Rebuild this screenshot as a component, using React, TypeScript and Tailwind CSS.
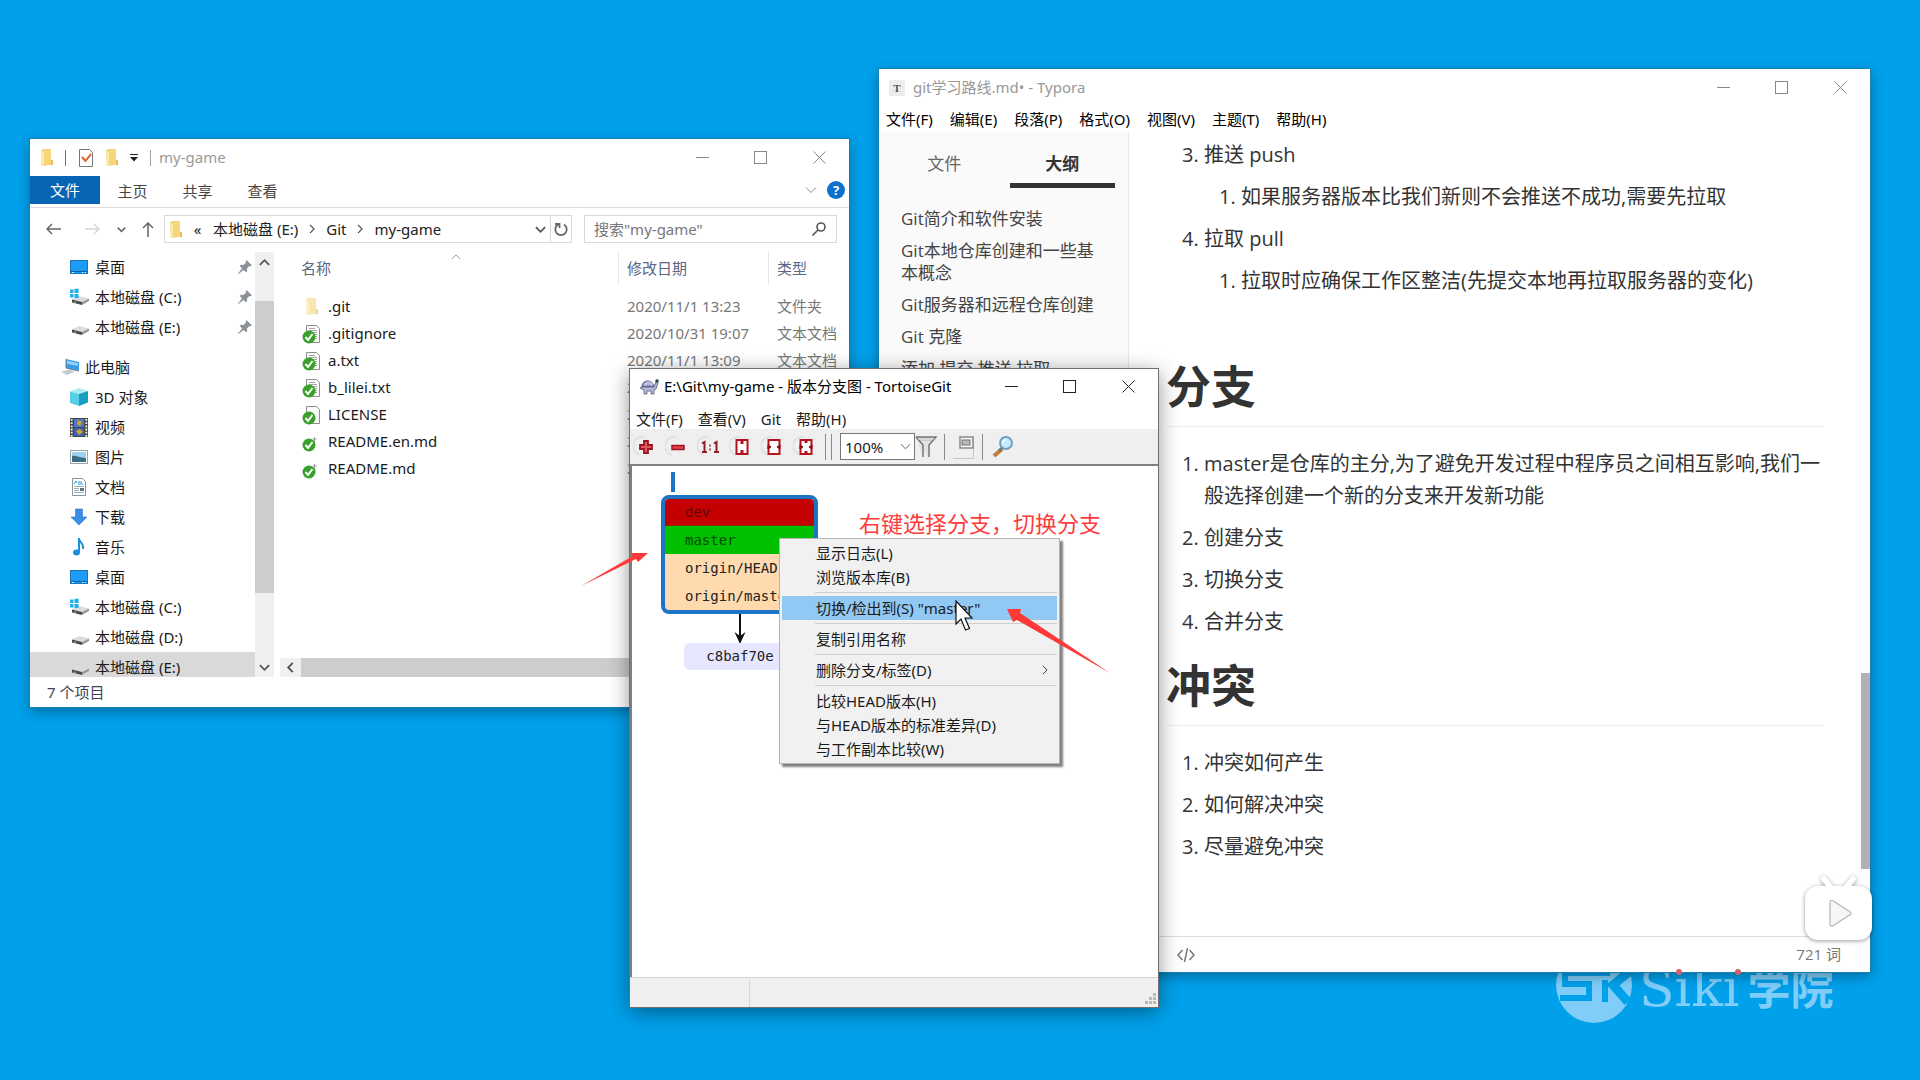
import type { ReactNode } from "react";

const uiFont = "font-['Noto_Sans','Noto_Sans_CJK_SC',sans-serif]";
const docFont = "font-['Open_Sans','Noto_Sans_CJK_SC',sans-serif]";

type IconProps = { className?: string };

function Chevron({ dir, className = "" }: { dir: "up" | "down" | "left" | "right"; className?: string }) {
  const paths = {
    up: "M1 8.5 6 3.5l5 5",
    down: "M1 3.5 6 8.5l5-5",
    left: "M8.5 1 3.5 6l5 5",
    right: "M3.5 1 8.5 6l-5 5",
  };
  return (
    <svg viewBox="0 0 12 12" className={`shrink-0 fill-none stroke-current ${className}`}>
      <path d={paths[dir]} />
    </svg>
  );
}

function FolderIcon({ className = "" }: IconProps) {
  return (
    <svg viewBox="0 0 12 17" className={`w-3 h-[17px] shrink-0 ${className}`}>
      <path d="M0 1.5 2 0h8v11h2v4.5L2 17l-2-1.5z" fill="#f5d67b" />
      <path d="M0 1.5 3 3v14l-3-1.5z" fill="#fbe9a9" />
      <path d="M10 11h2v5l-2 .3z" fill="#e9bd52" />
    </svg>
  );
}

function DesktopIcon() {
  return (
    <svg viewBox="0 0 18 18" className="w-[18px] h-[18px]">
      <rect x="0.5" y="2.5" width="17" height="13" fill="#1e9bf5" stroke="#1b75b5" />
      <path d="M1 13.5h16" stroke="#0b62a5" />
      <path d="M2 14.5h2M12 14.5h1.500M15 14.5h1" stroke="#d8efff" />
    </svg>
  );
}

function DriveIcon({ system = false }: { system?: boolean }) {
  return (
    <svg viewBox="0 0 20 18" className="w-5 h-[18px]">
      <path d="M2 11.500 9 8l10 2.500-7 3.500z" fill="#dcdcdc" />
      <path d="M2 11.500 12 14v3L2 14.500z" fill="#4a4a4a" />
      <path d="M12 14l7-3.500v2.500L12 17z" fill="#9a9a9a" />
      <path d="M4 14.200h2" stroke="#7fe07f" />
      {system && <path d="M0 1.500h3.500V5H0zM4.500 1 8.500.500V5h-4zM0 6h3.500v3.500H0zM4.500 6h4v4h-4z" fill="#1fb0ea" />}
    </svg>
  );
}

function ComputerIcon() {
  return (
    <svg viewBox="0 0 20 18" className="w-5 h-[18px]">
      <path d="M6 1l13 3v9L6 10z" fill="#3a9be0" />
      <path d="M7 2.500l11 2.500v3L7 6z" fill="#8fd0f7" />
      <path d="M1 14l8-2.500 6 2-8 3.500z" fill="#c3cbd3" />
      <path d="M6 1v9l13 3" stroke="#6a7f90" fill="none" />
    </svg>
  );
}

function CubeIcon() {
  return (
    <svg viewBox="0 0 18 18" className="w-[18px] h-[18px]">
      <path d="M0 3.500 9 0l9 3-9 3z" fill="#a9ecf5" />
      <path d="M0 3.500 9 6v12l-9-3z" fill="#55cfe3" />
      <path d="M9 6l9-3v11.500L9 18z" fill="#169fc0" />
    </svg>
  );
}

function VideoIcon() {
  return (
    <svg viewBox="0 0 18 19" className="w-[18px] h-[19px]">
      <rect width="18" height="19" fill="#474747" />
      <path d="M1.700 1v18M16.300 1v18" stroke="#f2f2f2" strokeWidth="1.800" strokeDasharray="1.800 1.400" />
      <rect x="4" y="1" width="10" height="8" fill="#5078c8" />
      <rect x="4" y="10" width="10" height="8" fill="#3b62b4" />
      <path d="M8 2l4 2-2 4-3-2zM6 13l4-2 3 3-4 3z" fill="#d5a52a" />
    </svg>
  );
}

function PictureIcon() {
  return (
    <svg viewBox="0 0 18 18" className="w-[18px] h-[18px]">
      <rect x="0.500" y="2.500" width="17" height="13" fill="#fff" stroke="#9aa4ad" />
      <rect x="2" y="4" width="14" height="10" fill="#9fd0f2" />
      <path d="M2 8c4-1 7 2 14 2v4H2z" fill="#3c6c88" />
    </svg>
  );
}

function DocumentIcon() {
  return (
    <svg viewBox="0 0 18 18" className="w-[18px] h-[18px]">
      <path d="M2.500.500h10l3 3v14h-13z" fill="#fff" stroke="#8d959c" />
      <path d="M4 6l2-3 1 2M8 4h4M8 6h5" stroke="#2c93d6" fill="none" />
      <path d="M4 8.500h10M4 10.500h5M4 12.500h5M4 14.500h10" stroke="#9fb0bd" />
      <rect x="10" y="10" width="4" height="3" fill="#5d7486" />
    </svg>
  );
}

function DownloadIcon() {
  return (
    <svg viewBox="0 0 18 18" className="w-[18px] h-[18px]">
      <path d="M5.500 1h7v8H17l-8 8-8-8h4.500z" fill="#3a8ee6" stroke="#2b74c4" strokeWidth="0.600" />
    </svg>
  );
}

function MusicIcon() {
  return (
    <svg viewBox="0 0 18 18" className="w-[18px] h-[18px]">
      <path d="M9 0v14M9 1c1 4 5 4 4 10" stroke="#1d8fe0" strokeWidth="2" fill="none" />
      <ellipse cx="6.500" cy="14.500" rx="3.500" ry="3" fill="#1d8fe0" />
    </svg>
  );
}

function PinIcon() {
  return (
    <svg viewBox="0 0 14 14" className="w-[14px] h-[14px]" fill="#8b9299">
      <path d="M8.500 0 14 5.500l-1.500.800-1-.300-2.500 2.500.200 2.500-1.200 1.200L5.500 10 .500 14 0 13.500 4 8.500 1.800 6 3 4.800l2.500.200L8 2.500 7.700 1.500z" />
    </svg>
  );
}

function FileIcon({ kind }: { kind: string }) {
  if (kind === "folder") return <FolderIcon className="opacity-60 ml-1" />;
  return (
    <svg viewBox="0 0 19 20" className="w-[19px] h-5">
      {kind !== "md" && <path d="M4.500 1.500h10l3 3v14h-13z" fill="#fbfbfb" stroke="#8e8e8e" />}
      {kind === "text" && <path d="M7 4.500h6M7 6.500h8M9 8.500h6M12 10.500h3M13 12.500h2M13 14.500h2" stroke="#a5a5a5" />}
      {kind === "md" && <path d="M12.500 5v5M10.500 7h4" stroke="#9a9a9a" fill="none" />}
      <circle cx="7" cy="13" r="6.500" fill="#39a12b" />
      <path d="M3.500 13l2.500 3 4.500-6" stroke="#fff" strokeWidth="2" fill="none" />
    </svg>
  );
}

function WindowControls({ className }: { className: string }) {
  return (
    <div className={`ml-auto flex self-stretch ${className}`}>
      <button aria-label="最小化" className="w-[58px] flex items-center justify-center">
        <svg viewBox="0 0 13 13" className="w-[13px] h-[13px] stroke-current"><path d="M0 6.500h13" /></svg>
      </button>
      <button aria-label="最大化" className="w-[58px] flex items-center justify-center">
        <svg viewBox="0 0 13 13" className="w-[13px] h-[13px] fill-none stroke-current"><rect x="0.500" y="0.500" width="12" height="12" /></svg>
      </button>
      <button aria-label="关闭" className="w-[60px] flex items-center justify-center">
        <svg viewBox="0 0 13 13" className="w-[13px] h-[13px] stroke-current"><path d="M.500.500l12 12M12.500.500l-12 12" /></svg>
      </button>
    </div>
  );
}

const quickAccess = [
  { name: "桌面", icon: <DesktopIcon /> },
  { name: "本地磁盘 (C:)", icon: <DriveIcon system /> },
  { name: "本地磁盘 (E:)", icon: <DriveIcon /> },
];

const computer = [
  { name: "3D 对象", icon: <CubeIcon /> },
  { name: "视频", icon: <VideoIcon /> },
  { name: "图片", icon: <PictureIcon /> },
  { name: "文档", icon: <DocumentIcon /> },
  { name: "下载", icon: <DownloadIcon /> },
  { name: "音乐", icon: <MusicIcon /> },
  { name: "桌面", icon: <DesktopIcon /> },
  { name: "本地磁盘 (C:)", icon: <DriveIcon system /> },
  { name: "本地磁盘 (D:)", icon: <DriveIcon /> },
  { name: "本地磁盘 (E:)", icon: <DriveIcon />, active: true },
];

const files = [
  { name: ".git", kind: "folder", date: "2020/11/1 13:23", type: "文件夹" },
  { name: ".gitignore", kind: "text", date: "2020/10/31 19:07", type: "文本文档" },
  { name: "a.txt", kind: "text", date: "2020/11/1 13:09", type: "文本文档" },
  { name: "b_lilei.txt", kind: "text", date: "2020/11/1 13:09", type: "文本文档" },
  { name: "LICENSE", kind: "blank", date: "2020/10/31 19:07", type: "文件" },
  { name: "README.en.md", kind: "md", date: "2020/10/31 19:07", type: "MD 文件" },
  { name: "README.md", kind: "md", date: "2020/10/31 19:07", type: "MD 文件" },
];

function TreeItem({ name, icon, pinned, active }: { name: string; icon: ReactNode; pinned?: boolean; active?: boolean }) {
  return (
    <button className={`w-full h-[30px] pl-10 pr-[3px] flex items-center text-left ${active ? "bg-[#d9d9d9]" : ""}`}>
      <span className="w-[25px] shrink-0 flex items-center">{icon}</span>
      <span className="flex-1 whitespace-nowrap">{name}</span>
      {pinned && <PinIcon />}
    </button>
  );
}

function Explorer() {
  return (
    <section className={`absolute left-[30px] top-[139px] w-[819px] h-[568px] flex flex-col bg-white overflow-hidden text-[15px] text-[#1a1a1a] shadow-[0_0_0_1px_#1580b4,0_4px_12px_rgba(0,0,0,0.35)] ${uiFont}`}>
      <header className="h-[37px] pl-[11px] flex items-center gap-3">
        <FolderIcon />
        <span className="w-px h-4 bg-gray-500" />
        <svg viewBox="0 0 16 18" className="w-4 h-[18px] shrink-0">
          <path d="M1.500.500h10l3 3v14h-13z" fill="#fff" stroke="#757575" />
          <path d="M4 8l3.500 4L13 5" stroke="#d9602a" strokeWidth="2" fill="none" />
        </svg>
        <FolderIcon />
        <button aria-label="自定义快速访问工具栏">
          <svg viewBox="0 0 8 8" className="w-2 h-2"><path d="M0 .500h8" stroke="#222" /><path d="M0 3h8L4 7.500z" fill="#222" /></svg>
        </button>
        <div className="flex items-center gap-2">
          <span className="w-px h-4 bg-gray-400" />
          <h2 className="text-[#999]">my-game</h2>
        </div>
        <WindowControls className="text-[#888]" />
      </header>
      <nav className="h-8 pb-[3px] flex items-stretch border-b border-[#dedede] text-[#444]">
        <button className="w-[70px] pt-px bg-[#0865b5] text-white">文件</button>
        <button className="w-[65px] pt-[3px]">主页</button>
        <button className="w-[65px] pt-[3px]">共享</button>
        <button className="w-[65px] pt-[3px]">查看</button>
        <button aria-label="展开功能区" className="ml-auto text-[#888]"><Chevron dir="down" className="w-3 h-3" /></button>
        <button aria-label="帮助" className="ml-[10px] mr-1 self-center w-[18px] h-[18px] rounded-full bg-[#0c71cd] text-white text-[13px] leading-[18px] font-bold">?</button>
      </nav>
      <div className="h-11 pr-3 pb-[2px] flex items-center text-[#666]">
        <div className="w-[134px] shrink-0 pl-4 flex items-center">
          <button aria-label="后退"><svg viewBox="0 0 15 12" className="w-[15px] h-3 fill-none stroke-[#666] stroke-[1.500]"><path d="M15 6H1M6 1 1 6l5 5" /></svg></button>
          <button aria-label="前进" className="ml-6"><svg viewBox="0 0 15 12" className="w-[15px] h-3 fill-none stroke-[#d5d5d5] stroke-[1.500]"><path d="M0 6h14M9 1l5 5-5 5" /></svg></button>
          <button aria-label="最近浏览的位置" className="ml-[17px]"><Chevron dir="down" className="w-[9px] h-[9px] stroke-2" /></button>
          <button aria-label="上移" className="ml-4"><svg viewBox="0 0 12 15" className="w-3 h-[15px] fill-none stroke-[#666] stroke-[1.500]"><path d="M6 15V1M1 6l5-5 5 5" /></svg></button>
        </div>
        <div className="w-[408px] shrink-0 h-7 pl-[5px] flex items-center border border-[#d9d9d9] text-[#222] whitespace-nowrap">
          <FolderIcon />
          <span className="w-[31px] text-center leading-none">«</span>
          <button>本地磁盘 (E:)</button>
          <Chevron dir="right" className="mx-[9px] w-[10px] h-[10px] text-[#555] stroke-[1.500]" />
          <button>Git</button>
          <Chevron dir="right" className="mx-[9px] w-[10px] h-[10px] text-[#555] stroke-[1.500]" />
          <button>my-game</button>
          <button aria-label="以前的位置" className="ml-auto mr-1 text-[#555]"><Chevron dir="down" className="w-[11px] h-[11px] stroke-2" /></button>
          <button aria-label="刷新" className="w-[21px] h-full flex items-center justify-center border-l border-[#d9d9d9]">
            <svg viewBox="0 0 14 15" className="w-[14px] h-[15px] fill-none stroke-[#666] stroke-[1.800]"><path d="M10 2.500a5.700 5.700 0 1 1-6 0M1 2h4.500v4" /></svg>
          </button>
        </div>
        <label className="ml-3 min-w-0 flex-1 h-7 pl-[9px] pr-[10px] flex items-center border border-[#d9d9d9]">
          <input type="search" aria-label="搜索 my-game" placeholder={'搜索"my-game"'} className="min-w-0 flex-1 outline-none placeholder:text-[#777]" />
          <svg viewBox="0 0 14 14" className="w-[14px] h-[14px] shrink-0 fill-none stroke-[#555] stroke-[1.600]"><circle cx="9" cy="5" r="4" /><path d="M6 8l-5.500 5.500" /></svg>
        </label>
      </div>
      <div className="flex-1 min-h-0 flex">
        <nav className="w-[225px] overflow-hidden">
          {quickAccess.map((item) => <TreeItem key={item.name} {...item} pinned />)}
          <button className="mt-[10px] w-full h-[30px] pl-[30px] flex items-center">
            <span className="w-[25px]"><ComputerIcon /></span>此电脑
          </button>
          {computer.map((item) => <TreeItem key={item.name} {...item} />)}
        </nav>
        <div className="w-[19px] flex flex-col bg-[#f0f0f0] text-[#555]">
          <button aria-label="向上滚动" className="h-[49px] flex justify-center pt-[5px]"><Chevron dir="up" className="w-[11px] h-[11px] stroke-2" /></button>
          <div className="flex-1 bg-[#cdcdcd]" />
          <button aria-label="向下滚动" className="h-[84px] flex items-end justify-center pb-1"><Chevron dir="down" className="w-[11px] h-[11px] stroke-2" /></button>
        </div>
        <div className="ml-[6px] flex-1 min-w-0 flex flex-col">
          <div className="relative flex-1 min-h-0 overflow-hidden">
            <Chevron dir="up" className="absolute left-[171px] top-0 w-[10px] h-[10px] text-[#888]" />
            <table className="w-full table-fixed text-left whitespace-nowrap">
              <thead className="text-[#5a6684]">
                <tr>
                  <th className="p-0 pb-[9px] font-normal"><div className="h-8 pl-[21px] leading-8 border-r border-[#e5e5e5]">名称</div></th>
                  <th className="w-[150px] p-0 pb-[9px] font-normal"><div className="h-8 pl-2 leading-8 border-r border-[#e5e5e5]">修改日期</div></th>
                  <th className="w-[80px] p-0 pb-[9px] font-normal"><div className="h-8 pl-2 leading-8">类型</div></th>
                </tr>
              </thead>
              <tbody>
                {files.map((file) => (
                  <tr key={file.name} className="h-[27px]">
                    <td className="p-0 pl-[22px]">
                      <div className="flex items-center">
                        <span className="w-[26px]"><FileIcon kind={file.kind} /></span>
                        {file.name}
                      </div>
                    </td>
                    <td className="p-0 pl-2 text-[#777]">{file.date}</td>
                    <td className="p-0 pl-2 text-[#777]">{file.type}</td>
                  </tr>
                ))}
              </tbody>
            </table>
          </div>
          <div className="h-[19px] flex bg-[#cdcdcd]">
            <button aria-label="向左滚动" className="w-[21px] bg-[#f0f0f0] flex items-center justify-center text-[#555]"><Chevron dir="left" className="w-[11px] h-[11px] stroke-2" /></button>
          </div>
        </div>
      </div>
      <footer className="h-[30px] pl-[17px] leading-[30px] text-[#3c4457]">7 个项目</footer>
    </section>
  );
}

const outline = ["Git简介和软件安装", "Git本地仓库创建和一些基本概念", "Git服务器和远程仓库创建", "Git 克隆", "添加 提交 推送 拉取"];

function Typora() {
  return (
    <section className={`absolute left-[879px] top-[69px] w-[991px] h-[903px] flex flex-col bg-white overflow-hidden text-[#333] shadow-[0_0_0_1px_#1580b4,0_4px_12px_rgba(0,0,0,0.35)] ${docFont}`}>
      <header className={`h-[37px] pl-[10px] flex items-center text-[15px] text-[#999] ${uiFont}`}>
        <span className="w-4 h-4 mr-2 bg-[#ececec] text-center text-[11px] leading-4 font-bold text-[#555] font-['Liberation_Serif',serif]">T</span>
        <h2>git学习路线.md• - Typora</h2>
        <WindowControls className="text-[#888]" />
      </header>
      <nav className={`h-[26px] pl-[7px] flex items-center gap-[17px] text-[15px] text-black ${uiFont}`}>
        {["文件(F)", "编辑(E)", "段落(P)", "格式(O)", "视图(V)", "主题(T)", "帮助(H)"].map((item) => (
          <button key={item}>{item}</button>
        ))}
      </nav>
      <div className="flex-1 min-h-0 flex">
        <aside className="w-[250px] bg-[#fafafa] border-r border-[#e8e8e8] overflow-hidden text-[17px] leading-[22px] text-[#444]">
          <div className="mx-[13px] grid grid-cols-2">
            <button className="mr-[7px] h-14 pt-3 pb-[5px] text-[#666]">文件</button>
            <button className="ml-[6px] h-14 pt-3 border-b-[5px] border-[#333] font-bold text-[#333]">大纲</button>
          </div>
          <ul className="mt-[15px] pl-[22px] pr-5">
            {outline.map((item) => (
              <li key={item} className="py-[5px]"><a href="#">{item}</a></li>
            ))}
          </ul>
        </aside>
        <article className="flex-1 pl-[37px] pr-[37px] pt-[7px] overflow-hidden text-xl leading-8 [&_li+li]:mt-[10px] [&_ol]:list-decimal [&_ol]:pl-[38px] [&_ol_ol]:pl-[37px] [&_h1]:mt-[21px] [&_h1]:pb-3 [&_h1]:mb-[21px] [&_h1]:border-b [&_h1]:border-[#eee] [&_h1]:text-[45px] [&_h1]:leading-[54px] [&_h1]:font-bold">
          <ol start={3}>
            <li>推送 push<ol className="mt-[10px]"><li>如果服务器版本比我们新则不会推送不成功,需要先拉取</li></ol></li>
            <li>拉取 pull<ol className="mt-[10px]"><li>拉取时应确保工作区整洁(先提交本地再拉取服务器的变化)</li></ol></li>
          </ol>
          <p className="mt-[10px] h-8" />
          <h1>分支</h1>
          <ol>
            <li>master是仓库的主分,为了避免开发过程中程序员之间相互影响,我们一般选择创建一个新的分支来开发新功能</li>
            <li>创建分支</li>
            <li>切换分支</li>
            <li>合并分支</li>
          </ol>
          <h1>冲突</h1>
          <ol>
            <li>冲突如何产生</li>
            <li>如何解决冲突</li>
            <li>尽量避免冲突</li>
          </ol>
        </article>
        <div className="w-[9px] pb-[67px] flex flex-col justify-end">
          <div className="h-[196px] bg-[#b3b0b5]" />
        </div>
      </div>
      <footer className="h-9 pl-[298px] pr-[29px] flex items-center justify-between border-t border-[#ddd] text-[15px] text-[#777]">
        <button aria-label="源代码模式">
          <svg viewBox="0 0 18 14" className="w-[18px] h-[14px] fill-none stroke-current stroke-[1.500]"><path d="M5.500 2 1 7l4.500 5M12.500 2 17 7l-4.500 5M10.500 0l-3 14" /></svg>
        </button>
        <button>721 词</button>
      </footer>
    </section>
  );
}

function ToolButton({ label, children }: { label: string; children: ReactNode }) {
  return (
    <button aria-label={label} className="w-8 h-full flex items-center justify-center">
      <svg viewBox="0 0 26 26" className="w-[26px] h-[26px]">
        <path d="M7 21A9 9 0 0 1 12 3" fill="none" stroke="#dde4e2" strokeWidth="2" />
        {children}
      </svg>
    </button>
  );
}

function Separator({ className = "" }: IconProps) {
  return <span className={`w-px h-[26px] bg-[#8a8a8a] ${className}`} />;
}

function TortoiseGit() {
  return (
    <section className={`absolute left-[630px] top-[369px] w-[528px] h-[638px] flex flex-col bg-white text-[15px] text-[#1a1a1a] shadow-[0_0_0_1px_#707070,0_4px_20px_rgba(0,0,0,0.45)] ${uiFont}`}>
      <header className="h-[35px] pl-[9px] flex items-center text-black">
        <svg viewBox="0 0 20 16" className="w-5 h-4 mr-[5px]">
          <path d="M3 8c0-8 11-8 12 0z" fill="#8f95c2" stroke="#4d5276" />
          <path d="M6 7l2-4h3l2 4M5 5h9" stroke="#d9dcf0" fill="none" />
          <path d="M3 8h12l2-5 2 1-2 6-2 1v4h-3v-3H8v3H5v-4L1 9z" fill="#b4b9d6" stroke="#575c80" strokeWidth="0.800" />
          <circle cx="18" cy="2" r="1.800" fill="#274b4a" />
        </svg>
        <h2>E:\Git\my-game - 版本分支图 - TortoiseGit</h2>
        <WindowControls className="text-[#222]" />
      </header>
      <nav className="h-[25px] pl-[6px] pt-1 flex items-center gap-[15px] leading-[22px]">
        {["文件(F)", "查看(V)", "Git", "帮助(H)"].map((item) => (
          <button key={item}>{item}</button>
        ))}
      </nav>
      <div className="h-[37px] flex items-center bg-[#efefef] border-b-2 border-[#808080]">
        <ToolButton label="放大">
          <path d="M11 7h4v4h4v4h-4v4h-4v-4H7v-4h4z" fill="#e05a62" stroke="#9b1520" strokeWidth="1.800" />
        </ToolButton>
        <ToolButton label="缩小">
          <rect x="7" y="11.500" width="12" height="4" fill="#e0434c" stroke="#9b1520" strokeWidth="1.500" />
        </ToolButton>
        <ToolButton label="实际大小">
          <path d="M5 9.500l2.500-1.500v10M5 18h5M17 9.500l2.500-1.500v10M17 18h5" stroke="#8c1f27" strokeWidth="2" fill="none" />
          <path d="M12 11.500h2M12 15.500h2" stroke="#c04a50" strokeWidth="2" />
        </ToolButton>
        <ToolButton label="适合高度">
          <rect x="7.500" y="6" width="11" height="14" fill="#fff" stroke="#b5121d" strokeWidth="2" />
          <path d="M13 5v5M13 21v-5" stroke="#b5121d" strokeWidth="3" />
        </ToolButton>
        <ToolButton label="适合宽度">
          <rect x="7.500" y="6" width="11" height="14" fill="#fff" stroke="#b5121d" strokeWidth="2" />
          <path d="M7 11l3 2-3 2zM19 11l-3 2 3 2z" fill="#8f0e18" stroke="#8f0e18" />
        </ToolButton>
        <ToolButton label="适合窗口">
          <rect x="7.500" y="6" width="11" height="14" fill="#fff" stroke="#b5121d" strokeWidth="2" />
          <path d="M13 5v4M13 21v-4" stroke="#b5121d" strokeWidth="3" />
          <path d="M7 11l3 2-3 2zM19 11l-3 2 3 2z" fill="#8f0e18" stroke="#8f0e18" />
        </ToolButton>
        <Separator className="ml-[3px]" />
        <Separator className="ml-[5px]" />
        <div className="relative ml-2">
          <select aria-label="缩放" className="w-[75px] h-[27px] pl-1 pt-px appearance-none border border-[#767676] bg-white">
            <option>100%</option>
          </select>
          <Chevron dir="down" className="absolute right-1 top-2 w-[11px] h-[11px] text-[#555] pointer-events-none" />
        </div>
        <button aria-label="筛选">
          <svg viewBox="0 0 22 24" className="w-[22px] h-6"><path d="M1 2h20l-7 8v12M1 2l7 8v12" fill="#e2e2e2" stroke="#777" strokeWidth="1.500" /><path d="M2 3h18l-2 2H4z" fill="#f7f7f7" stroke="#777" strokeWidth="0.500" /></svg>
        </button>
        <Separator className="ml-[7px]" />
        <button aria-label="显示概览" className="ml-[5px]">
          <svg viewBox="0 0 26 24" className="w-[26px] h-6">
            <path d="M3 23.500h20.500V3" stroke="#c5c5c5" fill="none" />
            <rect x="10" y="2" width="13" height="11" fill="#f3f3f3" stroke="#8b8b8b" strokeWidth="1.500" />
            <rect x="12" y="5" width="8" height="5" fill="#b9b9b9" stroke="#777" />
          </svg>
        </button>
        <Separator className="ml-[6px]" />
        <button aria-label="查找" className="ml-[9px]">
          <svg viewBox="0 0 22 22" className="w-[22px] h-[22px]">
            <path d="M10 13l-8 7" stroke="#c0803a" strokeWidth="4" />
            <path d="M11 11l-4 4" stroke="#777" strokeWidth="3" />
            <circle cx="14" cy="7" r="6" fill="#c4eafb" stroke="#6f9cbd" strokeWidth="1.800" />
            <path d="M11 7c0-2 1-3 3-3" stroke="#fff" strokeWidth="1.500" fill="none" />
          </svg>
        </button>
      </div>
      <div className="relative flex-1 border-l-2 border-[#808080] text-sm text-[#222] font-['DejaVu_Sans_Mono',monospace]">
        <span className="absolute left-[39px] top-[6px] w-1 h-5 bg-[#1b75c9]" />
        <div className="absolute left-[29px] top-[29px] w-[157px] h-[119px] flex flex-col overflow-hidden rounded-lg border-4 border-[#1b75c4] bg-[#ffdaae] leading-7">
          <div className="h-[27px] pl-5 bg-[#c40000] text-[#5e0808] border-b border-[#803000] leading-[26px]">dev</div>
          <div className="h-7 pl-5 bg-[#00c000] text-[#064806]">master</div>
          <div className="h-7 pl-5">origin/HEAD</div>
          <div className="h-7 pl-5">origin/master</div>
        </div>
        <svg viewBox="0 0 12 30" className="absolute left-[102px] top-[148px] w-3 h-[30px]">
          <path d="M6 0v24" stroke="#111" strokeWidth="2" />
          <path d="M.500 18 6 30l5.500-12L6 22z" fill="#111" />
        </svg>
        <div className="absolute left-[52px] top-[177px] w-[112px] h-[27px] rounded-md bg-[#e6e6ff] text-center leading-[27px]">c8baf70e</div>
      </div>
      <footer className="h-[30px] border-t border-[#d5d5d5] bg-[#efefef] flex justify-between items-end">
        <span className="w-[120px] h-[27px] border-r border-[#d5d5d5]" />
        <svg viewBox="0 0 12 12" className="w-3 h-3 m-[2px]" fill="#b8b8b8">
          <path d="M9 0h3v3H9zM9 4h3v3H9zM9 8h3v3H9zM5 4h3v3H5zM5 8h3v3H5zM1 8h3v3H1z" />
        </svg>
      </footer>
    </section>
  );
}

const menuGroups = [
  ["显示日志(L)", "浏览版本库(B)"],
  ['切换/检出到(S) "master"'],
  ["复制引用名称"],
  ["删除分支/标签(D)"],
  ["比较HEAD版本(H)", "与HEAD版本的标准差异(D)", "与工作副本比较(W)"],
];

function ContextMenu() {
  return (
    <div role="menu" className={`absolute left-[779px] top-[538px] w-[281px] px-[2px] py-[2px] border border-[#b5b5b5] bg-[#f1f1f1] text-[15px] text-[#1a1a1a] shadow-[3px_3px_2px_rgba(0,0,0,0.5)] ${uiFont}`}>
      {menuGroups.map((group, i) => (
        <div key={group[0]}>
          {i > 0 && <hr className="my-[3px] ml-[33px] border-[#cfcfcf]" />}
          {group.map((item) => (
            <button
              key={item}
              role="menuitem"
              className={`w-full h-6 pl-[34px] pr-[7px] flex items-center justify-between ${i === 1 ? "bg-[#91c8f4]" : ""}`}
            >
              {item}
              {i === 3 && <Chevron dir="right" className="w-[10px] h-[10px]" />}
            </button>
          ))}
        </div>
      ))}
    </div>
  );
}

function Watermark() {
  return (
    <div className="absolute left-[1556px] top-[947px] flex items-start text-[#7fcdf8] leading-none">
      <svg viewBox="0 0 76 76" className="w-[76px] h-[76px]">
        <circle cx="38" cy="38" r="38" fill="#7fcdf8" />
        <path d="M54 26H9v11h24v14H4M49 33v22" fill="none" stroke="#00a0ea" strokeWidth="6" />
        <path d="M74 24 57 38l15 17" fill="none" stroke="#00a0ea" strokeWidth="9" />
      </svg>
      <span className="ml-[7px] mt-[15px] text-[52px] font-['DejaVu_Serif',serif]">Siki</span>
      <span className="ml-2 mt-[18px] text-[43px] font-bold font-['Noto_Sans_CJK_SC',sans-serif]">学院</span>
    </div>
  );
}

function PlayerBadge() {
  return (
    <svg viewBox="0 0 75 70" className="absolute left-[1801px] top-[874px] w-[75px] h-[70px] drop-shadow-[0_1px_2px_rgba(0,0,0,0.4)]">
      <path d="M23 5l8 10M52 5l-8 10" stroke="#fff" strokeWidth="6" strokeLinecap="round" />
      <rect x="4" y="12" width="67" height="54" rx="13" fill="#fff" />
      <path d="M29 28c0-1.500 1.500-2 3-1.300l17 11c1.500 1 1.500 2 0 3l-17 11c-1.500 1-3 0-3-1.500z" fill="#f6f6f6" stroke="#b5b5b5" strokeWidth="1.200" />
    </svg>
  );
}

export default function App() {
  return (
    <main className="relative min-h-screen overflow-hidden bg-[#00a0ea]">
      <Watermark />
      <Explorer />
      <Typora />
      <span className="absolute left-[1676px] top-[969px] w-[6px] h-[6px] rounded-full bg-[#d4606c]" />
      <span className="absolute left-[1735px] top-[969px] w-[6px] h-[6px] rounded-full bg-[#d4606c]" />
      <TortoiseGit />
      <p className="absolute left-[859px] top-[506px] text-[22px] leading-8 text-[#ff3b3b] whitespace-nowrap font-['Noto_Sans_CJK_SC',sans-serif]">右键选择分支，切换分支</p>
      <ContextMenu />
      <svg viewBox="0 0 68 36" className="absolute left-[581px] top-[551px] w-[68px] h-9">
        <path d="M0 35 51 5.500 50 2l17 0-10 9-2-3z" fill="#ff3838" />
      </svg>
      <svg viewBox="0 0 104 66" className="absolute left-[1007px] top-[608px] w-[104px] h-[66px]">
        <path d="M0 1l14 0-1 4 90 60L10 12l-4 2z" fill="#ff3838" />
      </svg>
      <svg viewBox="0 0 20 32" className="absolute left-[955px] top-[600px] w-5 h-8">
        <path d="M1 1v23l5-5 4.500 11 4-1.500L10 18h7z" fill="#fff" stroke="#111" strokeWidth="1.200" />
      </svg>
      <PlayerBadge />
    </main>
  );
}
